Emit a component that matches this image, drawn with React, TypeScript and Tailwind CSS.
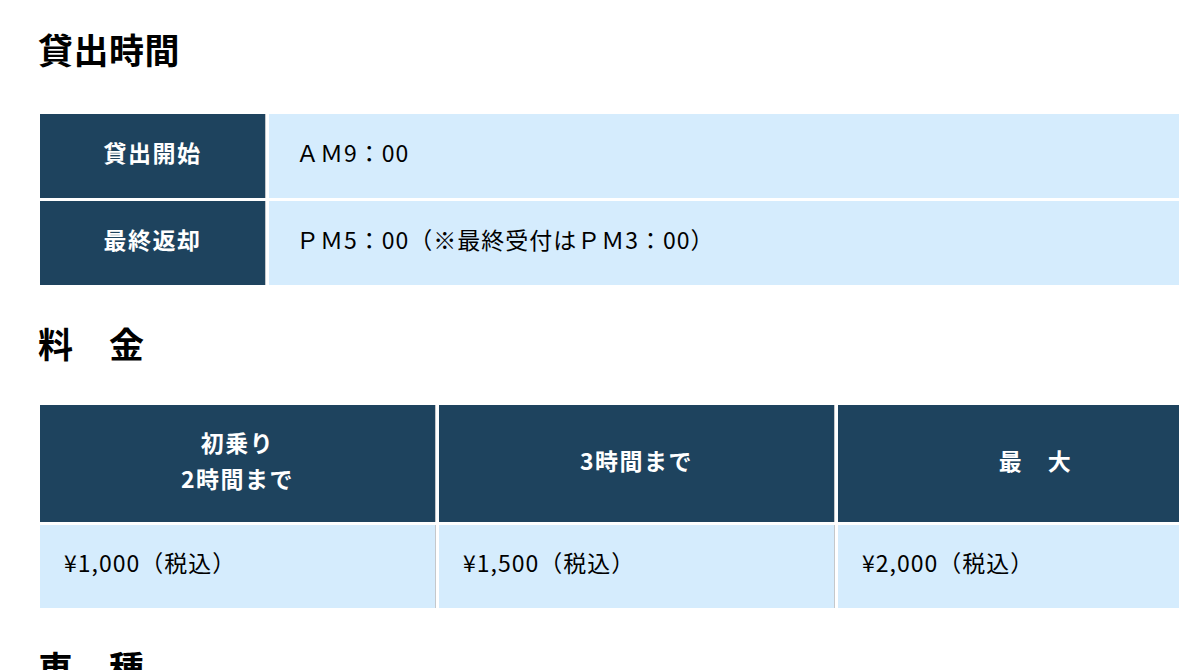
const font = '"Noto Sans CJK JP", "Noto Sans", sans-serif';

const dark = 'bg-[#1e435e] text-white font-bold border-r border-[#c4c8cc] flex items-center justify-center text-center pb-[8px] tracking-[1.5px]';
const light = 'bg-[#d5ecfd] text-black border-r border-[#c4c8cc] flex items-center pb-[8px] tracking-[1px]';

const Heading = ({ children, className = '' }: { children: React.ReactNode; className?: string }) => (
  <h2 className={`text-[35px] leading-[49px] font-bold text-black tracking-[0.5px] ${className}`}>{children}</h2>
);

const hours = [
  { label: '貸出開始', value: 'ＡＭ9：00' },
  { label: '最終返却', value: 'ＰＭ5：00（※最終受付はＰＭ3：00）' },
];

const prices = [
  { head: ['初乗り', '2時間まで'], price: '¥1,000（税込）' },
  { head: ['3時間まで'], price: '¥1,500（税込）' },
  { head: ['最　大'], price: '¥2,000（税込）' },
];

export default function App() {
  return (
    <div className="w-[1179px] h-[670px] overflow-hidden bg-white" style={{ fontFamily: font }}>
      <div className="pl-[38px] pt-[24px] w-[1240px] flex flex-col">
        {/* 貸出時間 */}
        <Heading>貸出時間</Heading>
        <div className="mt-[41px] ml-[2px] w-[1194px] grid grid-cols-[226px_1fr] gap-[3px] text-[23px]">
          {hours.map((row) => (
            <div key={row.label} className="contents">
              <div className={`${dark} h-[84px]`}>{row.label}</div>
              <div className={`${light} h-[84px] pl-[27px]`}>{row.value}</div>
            </div>
          ))}
        </div>

        {/* 料金 */}
        <Heading className="mt-[33px]">料　金</Heading>
        <div className="mt-[38px] ml-[2px] w-[1194px] grid grid-cols-3 gap-[3px] text-[23px]">
          {prices.map((p) => (
            <div key={p.price} className={`${dark} h-[117px] flex-col leading-[36px]`}>
              {p.head.map((line) => (
                <span key={line}>{line}</span>
              ))}
            </div>
          ))}
          {prices.map((p) => (
            <div key={p.price + 'v'} className={`${light} h-[83px] pl-[24px]`}>
              {p.price}
            </div>
          ))}
        </div>

        {/* 車種 */}
        <Heading className="mt-[34px]">車　種</Heading>
      </div>
    </div>
  );
}
